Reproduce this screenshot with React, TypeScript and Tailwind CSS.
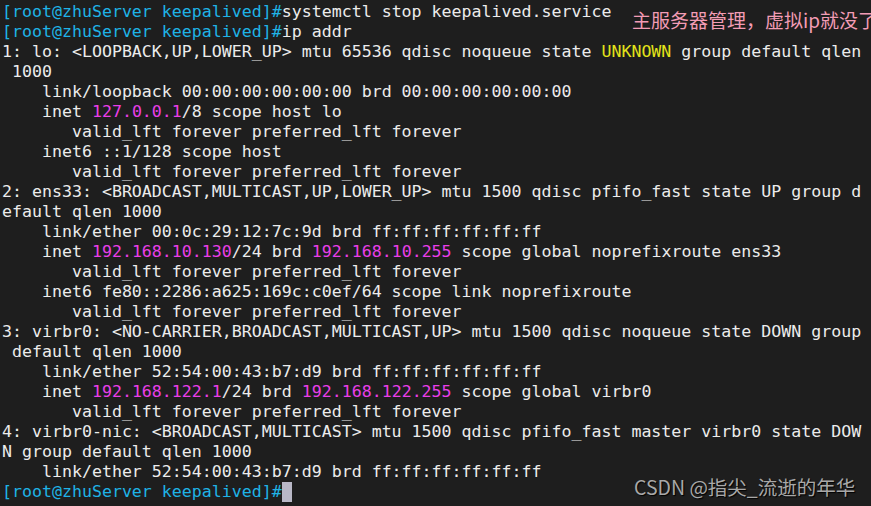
import React from "react";

type Seg = [string, string?];

const P = "text-[#1fb3e6]";
const M = "text-[#ea3ee8]";
const Y = "text-[#e3e31a]";

const prompt: Seg = ["[root@zhuServer keepalived]#", P];

const lines: Seg[][] = [
  [prompt, ["systemctl stop keepalived.service"]],
  [prompt, ["ip addr"]],
  [["1: lo: <LOOPBACK,UP,LOWER_UP> mtu 65536 qdisc noqueue state "], ["UNKNOWN", Y], [" group default qlen"]],
  [[" 1000"]],
  [["    link/loopback 00:00:00:00:00:00 brd 00:00:00:00:00:00"]],
  [["    inet "], ["127.0.0.1", M], ["/8 scope host lo"]],
  [["       valid_lft forever preferred_lft forever"]],
  [["    inet6 ::1/128 scope host"]],
  [["       valid_lft forever preferred_lft forever"]],
  [["2: ens33: <BROADCAST,MULTICAST,UP,LOWER_UP> mtu 1500 qdisc pfifo_fast state UP group d"]],
  [["efault qlen 1000"]],
  [["    link/ether 00:0c:29:12:7c:9d brd ff:ff:ff:ff:ff:ff"]],
  [["    inet "], ["192.168.10.130", M], ["/24 brd "], ["192.168.10.255", M], [" scope global noprefixroute ens33"]],
  [["       valid_lft forever preferred_lft forever"]],
  [["    inet6 fe80::2286:a625:169c:c0ef/64 scope link noprefixroute"]],
  [["       valid_lft forever preferred_lft forever"]],
  [["3: virbr0: <NO-CARRIER,BROADCAST,MULTICAST,UP> mtu 1500 qdisc noqueue state DOWN group"]],
  [[" default qlen 1000"]],
  [["    link/ether 52:54:00:43:b7:d9 brd ff:ff:ff:ff:ff:ff"]],
  [["    inet "], ["192.168.122.1", M], ["/24 brd "], ["192.168.122.255", M], [" scope global virbr0"]],
  [["       valid_lft forever preferred_lft forever"]],
  [["4: virbr0-nic: <BROADCAST,MULTICAST> mtu 1500 qdisc pfifo_fast master virbr0 state DOW"]],
  [["N group default qlen 1000"]],
  [["    link/ether 52:54:00:43:b7:d9 brd ff:ff:ff:ff:ff:ff"]],
];

export default function App() {
  return (
    <div className="relative w-[871px] h-[506px] overflow-hidden bg-[#1e1e1e]">
      <div className="pt-[2px] pl-[2px] font-['DejaVu_Sans_Mono',monospace] text-[16.6px] leading-[20px] text-[#ececec] whitespace-pre">
        {lines.map((segs, i) => (
          <div key={i} className="h-[20px]">
            {segs.map(([t, c], j) => (
              <span key={j} className={c}>
                {t}
              </span>
            ))}
          </div>
        ))}
        <div className="h-[20px] flex items-center">
          <span className={P}>[root@zhuServer keepalived]#</span>
          <span className="inline-block w-[10px] h-[20px] bg-[#b9b8c7]" />
        </div>
      </div>
      <div className="absolute left-[632px] top-[7px] whitespace-nowrap font-['Noto_Sans_CJK_SC',sans-serif] text-[19px] leading-[26px] text-[#f39cb5]">
        主服务器管理，虚拟ip就没了
      </div>
      <div className="absolute left-[634px] top-[473px] whitespace-nowrap font-['Noto_Sans_CJK_SC',sans-serif] text-[19.5px] leading-[28px] text-[#a8a8a8] [text-shadow:1px_1px_1px_#000]">
        CSDN @指尖_流逝的年华
      </div>
    </div>
  );
}
